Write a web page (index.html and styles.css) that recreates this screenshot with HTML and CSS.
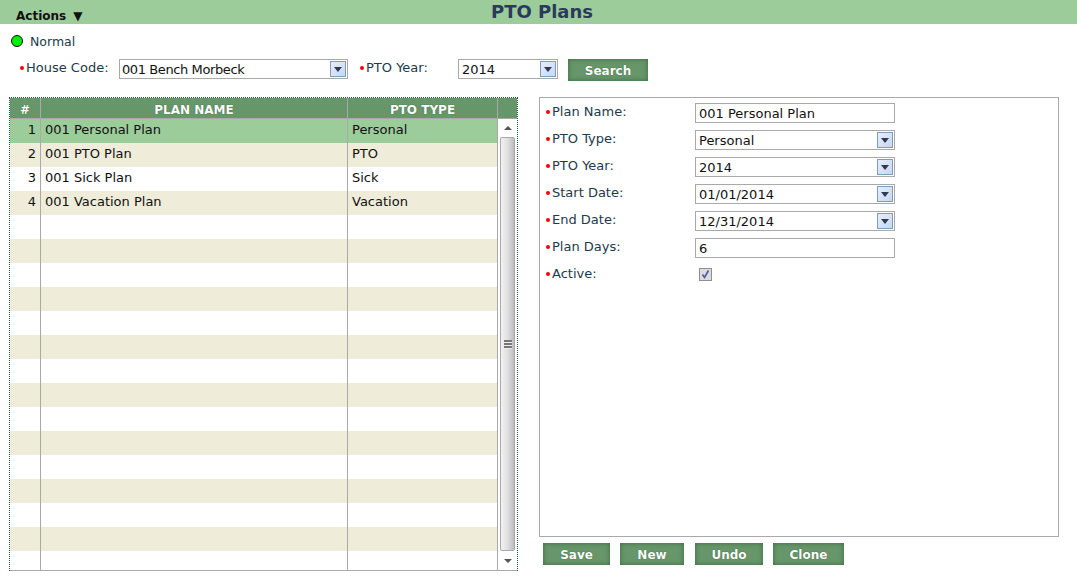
FILE: index.html
```html
<!DOCTYPE html>
<html lang="en">
<head>
    <meta charset="UTF-8">
    <title>PTO Plans</title>
    <link rel="stylesheet" href="styles.css">
</head>
<body>
  <div class="header">
    <div class="actions">Actions <span class="actions-arrow">&#9660;</span></div>
    <div class="title">PTO Plans</div>
  </div>

  <div class="status">
    <span class="status-dot"></span>
    <span class="status-text">Normal</span>
  </div>

  <div class="search-row">
    <label class="search-label house-label"><i class="req"></i>House Code:</label>
    <div class="combo house-combo"><span>001 Bench Morbeck</span><b class="combo-btn"></b></div>
    <label class="search-label year-label"><i class="req"></i>PTO Year:</label>
    <div class="combo year-combo"><span>2014</span><b class="combo-btn"></b></div>
    <button class="btn search-btn">Search</button>
  </div>

  <div class="main">
    <div class="grid-col">
      <div class="grid-wrap">
        <div class="grid">
          <div class="grid-head">
            <div class="cell-num">#</div>
            <div class="cell-name">PLAN NAME</div>
            <div class="cell-type">PTO TYPE</div>
            <div class="cell-corner"></div>
          </div>
          <div class="grid-body">
            <div class="rows">
              <div class="row selected"><div class="cell-num">1</div><div class="cell-name">001 Personal Plan</div><div class="cell-type">Personal</div></div>
              <div class="row alt"><div class="cell-num">2</div><div class="cell-name">001 PTO Plan</div><div class="cell-type">PTO</div></div>
              <div class="row"><div class="cell-num">3</div><div class="cell-name">001 Sick Plan</div><div class="cell-type">Sick</div></div>
              <div class="row alt"><div class="cell-num">4</div><div class="cell-name">001 Vacation Plan</div><div class="cell-type">Vacation</div></div>
              <div class="row"><div class="cell-num"></div><div class="cell-name"></div><div class="cell-type"></div></div>
              <div class="row alt"><div class="cell-num"></div><div class="cell-name"></div><div class="cell-type"></div></div>
              <div class="row"><div class="cell-num"></div><div class="cell-name"></div><div class="cell-type"></div></div>
              <div class="row alt"><div class="cell-num"></div><div class="cell-name"></div><div class="cell-type"></div></div>
              <div class="row"><div class="cell-num"></div><div class="cell-name"></div><div class="cell-type"></div></div>
              <div class="row alt"><div class="cell-num"></div><div class="cell-name"></div><div class="cell-type"></div></div>
              <div class="row"><div class="cell-num"></div><div class="cell-name"></div><div class="cell-type"></div></div>
              <div class="row alt"><div class="cell-num"></div><div class="cell-name"></div><div class="cell-type"></div></div>
              <div class="row"><div class="cell-num"></div><div class="cell-name"></div><div class="cell-type"></div></div>
              <div class="row alt"><div class="cell-num"></div><div class="cell-name"></div><div class="cell-type"></div></div>
              <div class="row"><div class="cell-num"></div><div class="cell-name"></div><div class="cell-type"></div></div>
              <div class="row alt"><div class="cell-num"></div><div class="cell-name"></div><div class="cell-type"></div></div>
              <div class="row"><div class="cell-num"></div><div class="cell-name"></div><div class="cell-type"></div></div>
              <div class="row alt"><div class="cell-num"></div><div class="cell-name"></div><div class="cell-type"></div></div>
              <div class="row"><div class="cell-num"></div><div class="cell-name"></div><div class="cell-type"></div></div>
            </div>
            <div class="scrollbar">
              <div class="scroll-arrow scroll-up"><span class="arrow-up"></span></div>
              <div class="scroll-thumb"><span class="grip"></span></div>
              <div class="scroll-arrow scroll-down"><span class="arrow-down"></span></div>
            </div>
          </div>
        </div>
      </div>
    </div>

    <div class="detail-col">
      <div class="detail">
        <div class="field"><label><i class="req"></i>Plan Name:</label><div class="text-box">001 Personal Plan</div></div>
        <div class="field"><label><i class="req"></i>PTO Type:</label><div class="combo field-combo"><span>Personal</span><b class="combo-btn"></b></div></div>
        <div class="field"><label><i class="req"></i>PTO Year:</label><div class="combo field-combo"><span>2014</span><b class="combo-btn"></b></div></div>
        <div class="field"><label><i class="req"></i>Start Date:</label><div class="combo field-combo"><span>01/01/2014</span><b class="combo-btn"></b></div></div>
        <div class="field"><label><i class="req"></i>End Date:</label><div class="combo field-combo"><span>12/31/2014</span><b class="combo-btn"></b></div></div>
        <div class="field"><label><i class="req"></i>Plan Days:</label><div class="text-box">6</div></div>
        <div class="field"><label><i class="req"></i>Active:</label>
          <div class="check">
            <svg width="11" height="11" viewBox="0 0 11 11"><path d="M2.5 5.5 L4.5 8.5 L8.5 1.5" fill="none" stroke="#4a5fa8" stroke-width="1.7"/></svg>
          </div>
        </div>
      </div>
      <div class="detail-buttons">
        <button class="btn save-btn">Save</button>
        <button class="btn new-btn">New</button>
        <button class="btn undo-btn">Undo</button>
        <button class="btn clone-btn">Clone</button>
      </div>
    </div>
  </div>
</body>
</html>
```

FILE: styles.css
```css
html, body {
  height: 100%;
}

body {
  margin: 0;
  background: #fff;
  color: #111;
  font-family: "DejaVu Sans", Verdana, sans-serif;
  font-size: 13px;
  overflow: hidden;
}

.header {
  display: flex;
  justify-content: center;
  position: relative;
  height: 24px;
  padding-left: 7px;
  background: #9ccc9a;
}

.actions {
  position: absolute;
  left: 16px;
  top: 9px;
  font-size: 12px;
  font-weight: bold;
  line-height: 15px;
  color: #111;
}

.actions-arrow {
  margin-left: 3px;
  font-size: 12px;
}

.title {
  font-size: 18px;
  font-weight: bold;
  line-height: 23px;
  color: #2b3a5c;
}

.status {
  display: flex;
  align-items: center;
  gap: 7px;
  height: 20px;
  margin-top: 7px;
  padding-left: 11px;
  color: #1c3a4a;
  font-size: 12.5px;
}

.status-dot {
  width: 10px;
  height: 10px;
  border: 1px solid #111;
  border-radius: 50%;
  background: #00ee00;
}

.status-text {
  padding-top: 1px;
}

.search-row {
  display: flex;
  align-items: flex-start;
  height: 22px;
  margin-top: 8px;
  padding-left: 20px;
}

.search-label {
  line-height: 18px;
  color: #1c3a4a;
}

.house-label {
  width: 99px;
}

.year-label {
  width: 98px;
  margin-left: 12px;
}

.req {
  display: inline-block;
  width: 4px;
  height: 4px;
  margin-right: 2px;
  border-radius: 50%;
  background: #f00;
  vertical-align: 2px;
}

.combo {
  display: flex;
  align-items: center;
  justify-content: space-between;
  box-sizing: border-box;
  height: 20px;
  border: 1px solid #a9a9a9;
  padding: 0 1px 0 3px;
  color: #111;
  line-height: 20px;
}

.combo span {
  padding-top: 1px;
}

.house-combo {
  width: 229px;
  padding-left: 2px;
  letter-spacing: -0.4px;
}

.year-combo {
  width: 100px;
}

.field-combo {
  width: 200px;
}

.combo-btn {
  position: relative;
  box-sizing: border-box;
  width: 16px;
  height: 16px;
  border: 1px solid #7f9db9;
  background: linear-gradient(135deg, #e6eefc, #c8d6f0);
}

.combo-btn::after {
  content: "";
  position: absolute;
  left: 3px;
  top: 5px;
  border-left: 4px solid transparent;
  border-right: 4px solid transparent;
  border-top: 5px solid #2f3b52;
}

.btn {
  box-sizing: border-box;
  height: 22px;
  border: 0;
  padding: 2px 0 0;
  background: #67966a;
  box-shadow: inset 0 0 5px #3c6a42;
  color: #fff;
  font-family: "DejaVu Sans", Verdana, sans-serif;
  font-size: 12px;
  font-weight: bold;
  line-height: 20px;
  text-shadow: 0 0 1px #2e5533;
}

.search-btn {
  width: 80px;
  margin-left: 10px;
}

.main {
  display: flex;
  margin-top: 16px;
}

.grid-col {
  width: 539px;
  padding-left: 9px;
  box-sizing: border-box;
}

.grid-wrap {
  box-sizing: border-box;
  width: 509px;
  height: 474px;
  border-top: 1px dotted #1c5c2c;
  border-left: 1px dotted #1c5c2c;
  border-right: 1px dotted #1c5c2c;
}

.grid {
  height: 472px;
  border-bottom: 1px solid #a9a9a9;
  overflow: hidden;
}

.grid-head {
  display: flex;
  height: 20px;
  border-bottom: 1px solid #a9a9a9;
  background: #67966a;
  color: #fff;
  font-size: 12px;
  font-weight: bold;
  line-height: 25px;
  text-align: center;
  text-shadow: 0 0 1px #2e5533;
}

.cell-num {
  box-sizing: border-box;
  flex: 0 0 31px;
  padding-right: 4px;
  border-right: 1px solid #a9a9a9;
  text-align: right;
}

.cell-name {
  box-sizing: border-box;
  flex: 0 0 307px;
  padding-left: 4px;
  border-right: 1px solid #a9a9a9;
}

.cell-type {
  box-sizing: border-box;
  flex: 0 0 150px;
  padding-left: 4px;
  border-right: 1px solid #a9a9a9;
}

.grid-head .cell-num,
.grid-head .cell-name,
.grid-head .cell-type {
  padding: 0;
  text-align: center;
}

.cell-corner {
  flex: 1;
}

.grid-body {
  display: flex;
  height: 451px;
}

.rows {
  flex: 0 0 488px;
  overflow: hidden;
}

.row {
  display: flex;
  height: 24px;
  line-height: 21px;
  background: #fff;
}

.row.alt {
  background: #efedda;
}

.row.selected {
  background: #9ccc9a;
}

.row .cell-num,
.row .cell-name,
.row .cell-type {
  height: 24px;
}

.scrollbar {
  display: flex;
  flex: 1;
  flex-direction: column;
  padding: 0 2px;
  background: #fff;
}

.scroll-arrow {
  display: flex;
  align-items: center;
  justify-content: center;
}

.scroll-up {
  height: 18px;
}

.scroll-down {
  height: 19px;
}

.arrow-up {
  border-left: 4px solid transparent;
  border-right: 4px solid transparent;
  border-bottom: 4px solid #555;
}

.arrow-down {
  border-left: 4px solid transparent;
  border-right: 4px solid transparent;
  border-top: 4px solid #555;
}

.scroll-thumb {
  display: flex;
  flex: 1;
  align-items: center;
  justify-content: center;
  border: 1px solid #a9a9a9;
  border-radius: 2px;
  background: linear-gradient(90deg, #f2f2f2, #e0e0e0 50%, #bcbcc2);
}

.grip {
  width: 8px;
  height: 9px;
  background: repeating-linear-gradient(180deg, #777 0, #777 2px, #eee 2px, #eee 3px);
}

.detail-col {
  width: 520px;
}

.detail {
  box-sizing: border-box;
  height: 440px;
  border: 1px solid #a9a9a9;
  padding: 5px 0 0 6px;
}

.field {
  display: flex;
  height: 20px;
  margin-bottom: 7px;
}

.field label {
  width: 149px;
  line-height: 18px;
  color: #1c3a4a;
}

.text-box {
  box-sizing: border-box;
  width: 200px;
  height: 20px;
  border: 1px solid #a9a9a9;
  padding-left: 3px;
  color: #111;
  line-height: 20px;
}

.check {
  box-sizing: border-box;
  width: 13px;
  height: 13px;
  margin: 3px 0 0 4px;
  border: 1px solid #8e8f8f;
  background: #dcdcdc;
}

.check svg {
  display: block;
}

.detail-buttons {
  display: flex;
  margin-top: 6px;
  padding-left: 4px;
}

.save-btn {
  width: 67px;
}

.new-btn {
  width: 64px;
  margin-left: 10px;
}

.undo-btn {
  width: 68px;
  margin-left: 11px;
}

.clone-btn {
  width: 71px;
  margin-left: 10px;
}
```
